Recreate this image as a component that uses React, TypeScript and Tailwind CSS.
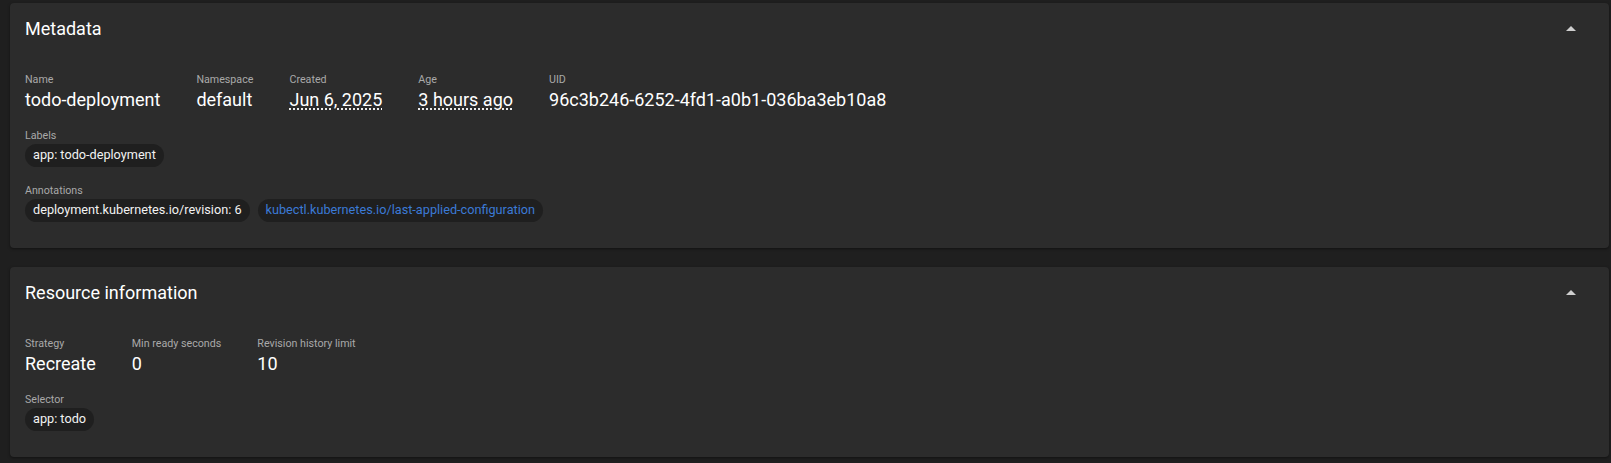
import clsx from "clsx";

type FieldProps = {
  label: string;
  value: string;
  dotted?: boolean;
};

const Field = ({ label, value, dotted }: FieldProps) => (
  <div className="flex flex-col whitespace-nowrap">
    <span className="text-[10.7px] leading-[17px] text-[#a9a9a9]">{label}</span>
    <span
      className={clsx(
        "text-[18px] leading-[24px] text-white",
        dotted && "underline decoration-dotted underline-offset-[3px]"
      )}
    >
      {value}
    </span>
  </div>
);

const Chip = ({ children, link }: { children: React.ReactNode; link?: boolean }) => (
  <span
    className={clsx(
      "inline-flex h-[23px] items-center rounded-full bg-[#1f1f1f] px-[8px] text-[12.7px] leading-none whitespace-nowrap",
      link ? "text-[#3b7ad6]" : "text-[#f2f2f2]"
    )}
  >
    {children}
  </span>
);

const ChipGroup = ({ label, chips }: { label: string; chips: { text: string; link?: boolean }[] }) => (
  <div className="mt-[15px] flex flex-col items-start">
    <span className="text-[10.7px] leading-[17px] text-[#a9a9a9]">{label}</span>
    <div className="flex gap-[8px]">
      {chips.map((c) => (
        <Chip key={c.text} link={c.link}>
          {c.text}
        </Chip>
      ))}
    </div>
  </div>
);

const Section = ({ title, children }: { title: string; children: React.ReactNode }) => (
  <div className="rounded-[4px] bg-[#2c2c2c] px-[15px] pt-[14px] pb-[26px] shadow-[0_1px_3px_rgba(0,0,0,0.45)]">
    <div className="flex h-[24px] items-center justify-between">
      <h2 className="text-[18px] leading-[24px] font-normal text-white">{title}</h2>
      {/* collapse toggle */}
      <svg viewBox="0 0 24 24" className="mr-[11px] h-[24px] w-[24px] fill-[#cfcfcf]">
        <path d="M7 14l5-5 5 5z" />
      </svg>
    </div>
    {children}
  </div>
);

export default function App() {
  return (
    <div
      className="min-h-[463px] bg-[#1f1f1f] pt-[3px] pr-[2px] pl-[10px]"
      style={{ fontFamily: "Roboto, 'Liberation Sans', sans-serif" }}
    >
      <div className="flex flex-col gap-[19px]">
        <Section title="Metadata">
          <div className="mt-[30px] flex gap-x-[36px]">
            <Field label="Name" value="todo-deployment" />
            <Field label="Namespace" value="default" />
            <Field label="Created" value="Jun 6, 2025" dotted />
            <Field label="Age" value="3 hours ago" dotted />
            <Field label="UID" value="96c3b246-6252-4fd1-a0b1-036ba3eb10a8" />
          </div>
          <ChipGroup label="Labels" chips={[{ text: "app: todo-deployment" }]} />
          <div className="mt-[1px]">
            <ChipGroup
              label="Annotations"
              chips={[
                { text: "deployment.kubernetes.io/revision: 6" },
                { text: "kubectl.kubernetes.io/last-applied-configuration", link: true },
              ]}
            />
          </div>
        </Section>

        <Section title="Resource information">
          <div className="mt-[30px] flex gap-x-[36px]">
            <Field label="Strategy" value="Recreate" />
            <Field label="Min ready seconds" value="0" />
            <Field label="Revision history limit" value="10" />
          </div>
          <ChipGroup label="Selector" chips={[{ text: "app: todo" }]} />
        </Section>
      </div>
    </div>
  );
}
